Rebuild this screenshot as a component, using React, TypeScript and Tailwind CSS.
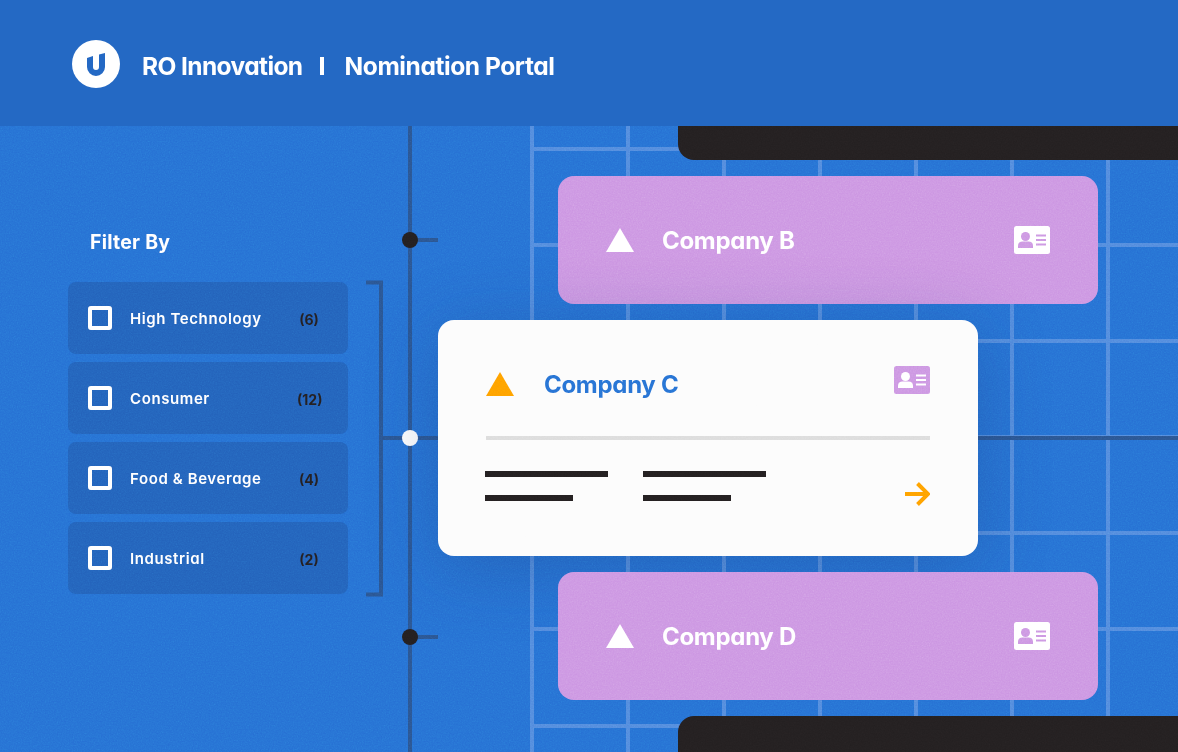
const font = "font-['Inter','Noto_Sans',sans-serif] [font-feature-settings:'cv11']";

const filters = [
  { label: "High Technology", count: "(6)" },
  { label: "Consumer", count: "(12)" },
  { label: "Food & Beverage", count: "(4)" },
  { label: "Industrial", count: "(2)" },
];

function Logo() {
  return (
    <div className="flex h-12 w-12 items-center justify-center rounded-full bg-white">
      <svg width="18" height="23" viewBox="0 0 18 23" className="mb-[-1px]">
        <path
          d="M0 5 6 3v11a3 3 0 0 0 6 0V1.500L18 0v14a9 9 0 0 1-18 0Z"
          fill="#2469c4"
        />
      </svg>
    </div>
  );
}

function Triangle({ color }: { color: string }) {
  return (
    <svg width="28" height="24" viewBox="0 0 28 24" className="shrink-0">
      <path d="M14 0 28 24H0Z" fill={color} />
    </svg>
  );
}

function IdCard({ bg, fg }: { bg: string; fg: string }) {
  return (
    <svg width="36" height="28" viewBox="0 0 36 28" className="shrink-0">
      <rect width="36" height="28" rx="2.500" fill={bg} />
      <circle cx="11.500" cy="10.500" r="4.500" fill={fg} />
      <path d="M4 22v-2.500C4 17 6 15.500 8.500 15.500h6c2.500 0 4.500 1.500 4.500 4V22Z" fill={fg} />
      <path d="M22 9.500h10M22 14h10M22 18.500h10" stroke={fg} strokeWidth="2" />
    </svg>
  );
}

function Bar({ w }: { w: string }) {
  return <div className={`h-[6px] bg-[#231f20] ${w}`} />;
}

function PurpleCard({ name, offset }: { name: string; offset: string }) {
  return (
    <div className={`flex h-32 w-[540px] shrink-0 items-center rounded-2xl bg-[#cc95e2] pl-[48px] pr-[48px] ${offset}`}>
      <Triangle color="#ffffff" />
      <span className="ml-[28px] flex-1 pt-px text-[24px] font-bold tracking-[-0.3px] text-white">{name}</span>
      <IdCard bg="#ffffff" fg="#cc95e2" />
    </div>
  );
}

function Backdrop() {
  const xs = [532, 628, 724, 820, 916, 1012, 1108];
  const ys = [23, 119, 215, 311, 407, 503, 600];
  return (
    <svg width="1178" height="626" viewBox="0 0 1178 626" className="absolute left-0 top-0">
      <g stroke="#5289dd" strokeWidth="4">
        {xs.map((x) => (
          <line key={x} x1={x} y1="0" x2={x} y2="626" />
        ))}
        {ys.map((y) => (
          <line key={y} x1="530" y1={y} x2="1178" y2={y} />
        ))}
      </g>
      <g stroke="#2a5490" strokeWidth="4" fill="none">
        <line x1="410" y1="0" x2="410" y2="626" />
        <path d="M366 156.500h15v312h-15" />
        <path d="M380 312h58M410 114h28M410 511h28M978 312h200" />
      </g>
      <circle cx="410" cy="114" r="8" fill="#231f20" />
      <circle cx="410" cy="511" r="8" fill="#231f20" />
      <circle cx="410" cy="312" r="8" fill="#ffffff" />
    </svg>
  );
}

function Grain() {
  return (
    <svg width="1178" height="752" className="pointer-events-none absolute left-0 top-0 opacity-[0.28] mix-blend-overlay">
      <filter id="grain">
        <feTurbulence type="fractalNoise" baseFrequency="0.75" numOctaves="2" seed="4" />
        <feColorMatrix type="saturate" values="0" />
      </filter>
      <rect width="1178" height="752" filter="url(#grain)" />
    </svg>
  );
}

export default function App() {
  return (
    <div className={`relative flex h-[752px] w-[1178px] flex-col overflow-hidden bg-[#266fd3] ${font}`}>
      <header className="relative z-10 flex h-[126px] shrink-0 items-center bg-[#2469c4] pl-[72px] pt-[2px] text-white">
        <Logo />
        <span className="ml-[22px] pt-[5px] text-[24.500px] font-bold tracking-[-0.6px]">RO Innovation</span>
        <span className="ml-[17px] mt-[3px] h-[18px] w-[4px] bg-white" />
        <span className="ml-[21px] pt-[5px] text-[24.500px] font-bold tracking-[-0.42px]">Nomination Portal</span>
      </header>

      <main className="relative flex flex-1 overflow-hidden">
        <Backdrop />

        <aside className="relative w-[438px] shrink-0 pl-[68px] pt-[104px]">
          <h2 className="pl-[22px] text-[19.500px] leading-6 font-bold tracking-[0.25px] text-white">Filter By</h2>
          <ul className="mt-[28px] flex w-[280px] flex-col gap-2">
            {filters.map((f) => (
              <li key={f.label} className="flex h-[72px] items-center rounded-lg bg-[#2361ba] pl-5 pr-[27px]">
                <span className="h-6 w-6 rounded-[3px] border-4 border-white" />
                <span className="ml-[18px] flex-1 pt-[3px] text-[15px] font-semibold tracking-[0.6px] text-white">{f.label}</span>
                <span className="w-6 pt-[2px] text-center text-[14px] font-bold whitespace-nowrap text-[#231f20]">{f.count}</span>
              </li>
            ))}
          </ul>
        </aside>

        <section className="relative flex flex-1 flex-col gap-4">
          <div className="ml-[240px] h-[34px] shrink-0 rounded-bl-2xl bg-[#231f20]" />
          <PurpleCard name="Company B" offset="ml-[120px]" />

          <div className="flex h-[236px] w-[540px] shrink-0 flex-col rounded-2xl bg-[#fcfcfc] px-[48px] shadow-[0_12px_70px_rgba(25,60,120,0.3)]">
            <div className="flex h-[116px] items-center pt-[12px]">
              <Triangle color="#ff9f00" />
              <span className="ml-[30px] flex-1 pt-[2px] text-[24px] font-bold tracking-[-0.3px] text-[#266fd3]">Company C</span>
              <span className="-mt-[8px]">
                <IdCard bg="#cc95e2" fg="#ffffff" />
              </span>
            </div>
            <div className="h-1 w-full bg-[#dcdcdc]" />
            <div className="mt-[31px] flex items-start">
              <div className="-ml-px flex flex-col gap-[18px]">
                <Bar w="w-[123px]" />
                <Bar w="w-[88px]" />
              </div>
              <div className="ml-[35px] flex flex-1 flex-col gap-[18px]">
                <Bar w="w-[123px]" />
                <Bar w="w-[88px]" />
              </div>
              <svg width="25" height="24" viewBox="0 0 25 24" className="mt-[11px]">
                <path d="M0 12h22M12.500 1.500 23 12 12.500 22.500" fill="none" stroke="#ff9f00" strokeWidth="4" />
              </svg>
            </div>
          </div>

          <PurpleCard name="Company D" offset="ml-[120px]" />
          <div className="ml-[240px] h-12 shrink-0 rounded-tl-2xl bg-[#231f20]" />
        </section>
      </main>
      <Grain />
    </div>
  );
}
